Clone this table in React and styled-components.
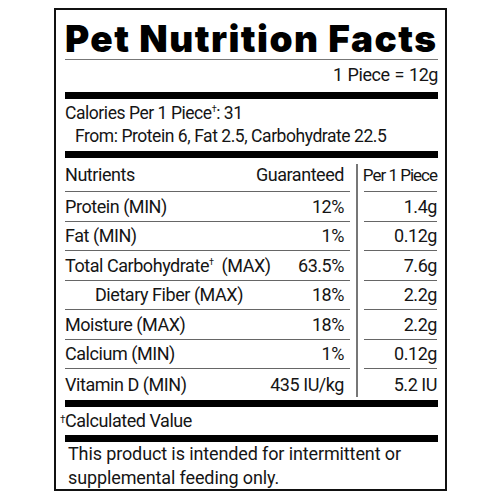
import React from "react";
import styled, { createGlobalStyle } from "styled-components";

const GlobalStyle = createGlobalStyle`
  body {
    margin: 0;
    background: #fff;
    font-family: Roboto, "Liberation Sans", sans-serif;
    color: #151515;
  }
`;

const Label = styled.div`
  box-sizing: border-box;
  width: 393px;
  height: 483px;
  margin: 8px 0 0 54px;
  border: 2px solid #111;
  padding: 0 7px 0 9px;
  display: flex;
  flex-direction: column;
  letter-spacing: -0.45px;
`;

const Title = styled.h1`
  margin: 0;
  padding-top: 9px;
  height: 40px;
  border-bottom: 1px solid #777;
  font-family: Inter, "Liberation Sans", sans-serif;
  font-weight: 900;
  font-size: 37px;
  line-height: 40px;
  letter-spacing: 1.45px;
  color: #000;
  white-space: nowrap;
`;

const Serving = styled.div`
  text-align: right;
  font-size: 18px;
  line-height: 20px;
  word-spacing: 1px;
  padding: 5px 0 7px;
`;

const Bar = styled.div`
  height: 7px;
  background: #000;
  flex-shrink: 0;
`;

const Calories = styled.div`
  font-size: 17.5px;
  line-height: 23px;
  padding: 3px 0 3px;
`;

const Indent = styled.div`
  padding-left: ${(p) => p.$indent || 0}px;
`;

const Sup = styled.sup`
  font-size: 9px;
  vertical-align: 7px;
  line-height: 0;
`;

const Table = styled.div`
  display: flex;
  font-size: 18px;
`;

const Column = styled.div`
  display: flex;
  flex-direction: column;
  width: ${(p) => p.$width}px;
`;

const Divider = styled.div`
  width: 2px;
  background: #777;
  margin: 6px 6px 3px 6px;
`;

const Cell = styled.div`
  display: flex;
  align-items: center;
  justify-content: flex-end;
  height: ${(p) => (p.$header ? 33 : 28.5)}px;
  padding-right: ${(p) => p.$pad || 0}px;
  border-bottom: 1px solid #666;
  white-space: nowrap;
  font-size: ${(p) => (p.$tight ? "17px" : "inherit")};
  letter-spacing: ${(p) => (p.$tight ? "-1px" : "inherit")};

  &:last-child {
    border-bottom: none;
    height: 31px;
  }
`;

const Name = styled.span`
  padding-left: ${(p) => p.$indent || 0}px;
  margin-right: auto;
`;

const Footnote = styled.div`
  font-size: 18px;
  line-height: 20px;
  padding: 4px 0 4px;
  position: relative;
`;

const Dagger = styled.span`
  position: absolute;
  left: -5px;
  top: 3px;
  font-size: 10px;
`;

const Note = styled.div`
  font-size: 18px;
  line-height: 24px;
  padding: 0 0 0 3px;
  letter-spacing: -0.12px;
`;

const rows = [
  { name: "Protein (MIN)", g: "12%", p: "1.4g" },
  { name: "Fat (MIN)", g: "1%", p: "0.12g" },
  {
    name: (
      <>
        Total Carbohydrate<Sup>†</Sup>&nbsp; (MAX)
      </>
    ),
    g: "63.5%",
    p: "7.6g",
  },
  { name: "Dietary Fiber (MAX)", g: "18%", p: "2.2g", indent: 30 },
  { name: "Moisture (MAX)", g: "18%", p: "2.2g" },
  { name: "Calcium (MIN)", g: "1%", p: "0.12g" },
  { name: "Vitamin D (MIN)", g: "435 IU/kg", p: "5.2 IU" },
];

export default function App() {
  return (
    <>
      <GlobalStyle />
      <Label>
        <Title>Pet Nutrition Facts</Title>
        <Serving>1 Piece = 12g</Serving>
        <Bar />
        <Calories>
          <div>
            Calories Per 1 Piece<Sup>†</Sup>: 31
          </div>
          <Indent $indent={10}>From: Protein 6, Fat 2.5, Carbohydrate 22.5</Indent>
        </Calories>
        <Bar />
        <Table>
          <Column $width={285}>
            <Cell $header $pad={6}>
              <Name>Nutrients</Name>
              <span>Guaranteed</span>
            </Cell>
            {rows.map((r, i) => (
              <Cell key={i} $pad={6}>
                <Name $indent={r.indent}>{r.name}</Name>
                <span>{r.g}</span>
              </Cell>
            ))}
          </Column>
          <Divider />
          <Column $width={73}>
            <Cell $header $tight>
              <span>Per 1 Piece</span>
            </Cell>
            {rows.map((r, i) => (
              <Cell key={i}>
                <span>{r.p}</span>
              </Cell>
            ))}
          </Column>
        </Table>
        <Bar />
        <Footnote>
          <Dagger>†</Dagger>Calculated Value
        </Footnote>
        <Bar />
        <Note>
          This product is intended for intermittent or
          <br />
          supplemental feeding only.
        </Note>
      </Label>
    </>
  );
}
